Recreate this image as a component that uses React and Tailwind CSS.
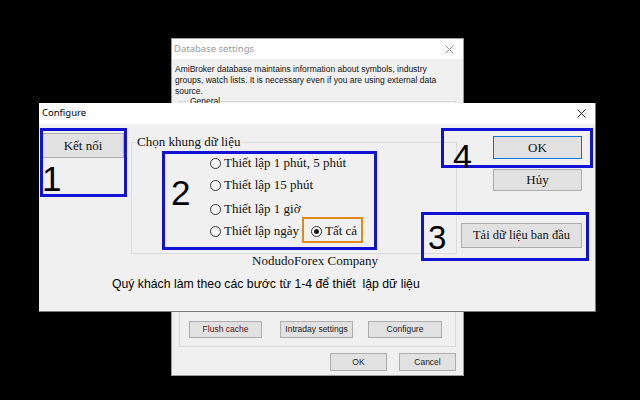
import React from "react";

function CloseX({ color = "#000", size = 9 }) {
  return (
    <svg width={size} height={size} viewBox="0 0 9 9" className="block">
      <path d="M0.5 0.5 L8.5 8.5 M8.5 0.5 L0.5 8.5" stroke={color} strokeWidth="1" fill="none" />
    </svg>
  );
}

function Radio({ checked, label, className = "" }) {
  return (
    <div className={"flex items-center " + className}>
      <span className="w-[11px] h-[11px] rounded-full border border-[#333333] bg-[#fafafa] flex items-center justify-center shrink-0">
        {checked && <span className="w-[5px] h-[5px] rounded-full bg-[#1a1a1a]" />}
      </span>
      <span className="ml-[3px] whitespace-nowrap">{label}</span>
    </div>
  );
}

function WinBtn({ children, className = "" }) {
  return (
    <div className={"bg-[#e1e1e1] border border-[#adadad] flex items-center justify-center whitespace-nowrap " + className}>
      {children}
    </div>
  );
}

export default function App() {
  return (
    <div className="w-[640px] h-[400px] bg-black relative overflow-hidden">
      {/* Background window: Database settings */}
      <div
        className="absolute left-[171px] top-[38px] w-[293px] h-[338px] bg-[#f0f0f0] border border-[#9a9a9a] flex flex-col"
        style={{ fontFamily: '"Liberation Sans", Arial, sans-serif' }}
      >
        <div className="h-[20px] bg-white flex items-center justify-between pl-[2px] pr-[9px] shrink-0">
          <span className="text-[9.5px] text-[#9a9a9a]" style={{ fontFamily: '"Noto Sans", sans-serif' }}>
            Database settings
          </span>
          <CloseX color="#9a9a9a" size={9} />
        </div>
        <div className="flex-1 flex flex-col pt-[5px]">
          <p className="pl-[3px] text-[8.5px] leading-[11px] text-[#111] whitespace-nowrap">
            AmiBroker database maintains information about symbols, industry
            <br />
            groups, watch lists. It is necessary even if you are using external data
            <br />
            source.
          </p>
          <fieldset className="flex-1 mx-[7px] mt-[-1px] border border-[#d9d9d9] px-[9px] pb-[8px] flex flex-col">
            <legend className="text-[8.5px] leading-[11px] px-[1px] text-[#111]">General</legend>
            <div className="mt-auto flex text-[8.5px] text-[#222]">
              <WinBtn className="w-[73px] h-[17px] text-[#5a1010]">Flush cache</WinBtn>
              <WinBtn className="w-[73px] h-[17px] ml-[18px]">Intraday settings</WinBtn>
              <WinBtn className="w-[74px] h-[17px] ml-[15px]">Configure</WinBtn>
            </div>
          </fieldset>
          <div className="flex justify-end mr-[7px] mt-[6px] mb-[4px] text-[8.5px] text-[#222]">
            <WinBtn className="w-[57px] h-[18px]">OK</WinBtn>
            <WinBtn className="w-[57px] h-[18px] ml-[12px]">Cancel</WinBtn>
          </div>
        </div>
      </div>

      {/* Foreground window: Configure */}
      <div className="absolute left-[39px] top-[103px] w-[557px] h-[209px] bg-[#f0f0f0] border-r border-b border-[#7a7a7a] flex flex-col">
        <div className="h-[21px] bg-white flex items-center justify-between pl-[3px] pr-[9px] shrink-0">
          <span className="text-[9.5px] text-black" style={{ fontFamily: '"Noto Sans", sans-serif' }}>
            Configure
          </span>
          <CloseX color="#222" size={9} />
        </div>
        <div
          className="relative flex-1 text-[13px] text-[#111]"
          style={{ fontFamily: '"Liberation Serif", "Times New Roman", serif' }}
        >
          <div className="flex items-start h-[130px]">
            <WinBtn className="ml-[3px] mt-[9px] w-[82px] h-[25px]">Kết nối</WinBtn>
            <fieldset className="ml-[7px] mt-[10px] w-[326px] h-[120px] border border-[#dcdcdc] px-[4px]">
              <legend className="px-[1px] leading-[16px]">Chọn khung dữ liệu</legend>
              <div className="pl-[74px] pt-[2px] flex flex-col">
                <Radio label="Thiết lập 1 phút, 5 phút" className="h-[22px]" />
                <Radio label="Thiết lập 15 phút" className="h-[22px]" />
                <Radio label="Thiết lập 1 giờ" className="h-[22px] mt-[2px]" />
                <div className="flex h-[22px] items-center">
                  <Radio label="Thiết lập ngày" className="w-[101px]" />
                  <Radio label="Tất cả" checked />
                </div>
              </div>
            </fieldset>
            <div className="ml-[4px] w-[121px] flex flex-col items-end">
              <WinBtn className="mt-[12px] w-[89px] h-[23px] border-[#0078d7]!">OK</WinBtn>
              <WinBtn className="mt-[10px] w-[89px] h-[22px]">Hủy</WinBtn>
              <WinBtn className="mt-[32px] w-[121px] h-[25px] text-[12.5px]">Tải dữ liệu ban đầu</WinBtn>
            </div>
          </div>
          <p className="pl-[213px] h-[14px] leading-[14px] whitespace-nowrap">NodudoForex Company</p>
          <p
            className="pl-[73px] mt-[8px] leading-[16px] text-[12.25px] text-black whitespace-pre"
            style={{ fontFamily: '"Liberation Sans", Arial, sans-serif' }}
          >
            {"Quý khách làm theo các bước từ 1-4 để thiết  lập dữ liệu"}
          </p>

          {/* Annotation overlays */}
          <div
            className="pointer-events-none"
            style={{ fontFamily: '"Liberation Sans", Arial, sans-serif' }}
          >
            <div className="absolute left-[1px] top-[4px] w-[87px] h-[69px] border-[3px] border-[#1212d4]" />
            <span className="absolute left-[3px] top-[37px] text-[35px] leading-[36px] text-black">1</span>

            <div className="absolute left-[123px] top-[27px] w-[215px] h-[99px] border-[3px] border-[#1212d4]" />
            <span className="absolute left-[132px] top-[51px] text-[35px] leading-[36px] text-black">2</span>

            <div className="absolute left-[263px] top-[93px] w-[61px] h-[26px] border-[2px] border-[#e08a1c]" />

            <div className="absolute left-[382px] top-[88px] w-[168px] h-[49px] border-[3px] border-[#1212d4]" />
            <span className="absolute left-[389px] top-[97px] text-[33px] leading-[33px] text-black">3</span>

            <div className="absolute left-[402px] top-[4px] w-[152px] h-[40px] border-[3px] border-[#1212d4]" />
            <span className="absolute left-[414px] top-[15px] text-[34px] leading-[34px] text-black">4</span>
          </div>
        </div>
      </div>
    </div>
  );
}
